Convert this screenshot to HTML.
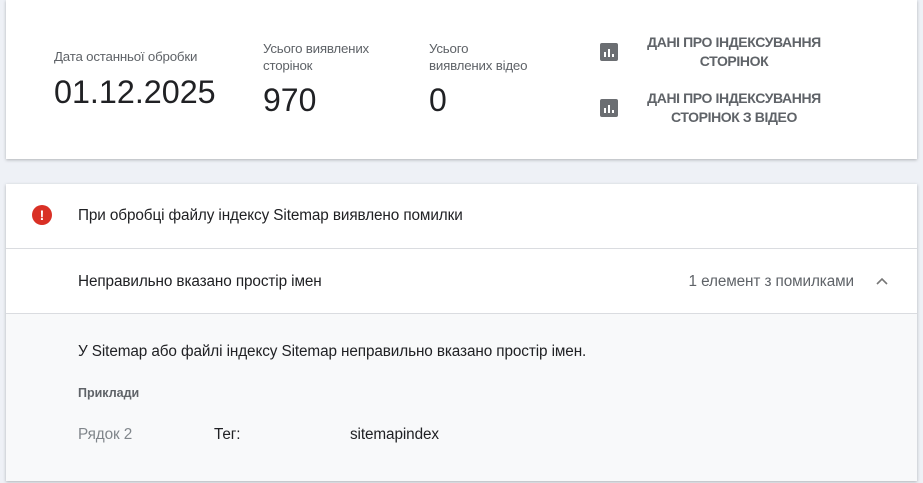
<!DOCTYPE html>
<html><head><meta charset="utf-8"><style>
*{margin:0;padding:0;box-sizing:border-box}
body{width:923px;height:483px;background:#eef1f6;font-family:"Liberation Sans",sans-serif;position:relative;overflow:hidden}
.card{position:absolute;left:6px;width:911px;background:#fff;box-shadow:0 1px 3px rgba(60,64,67,.35)}
.a{position:absolute;white-space:nowrap}
.lbl{font-size:13.3px;color:#5f6368;line-height:17px;letter-spacing:-0.2px}
.big{font-size:32px;color:#202124}
.lnk{font-size:14px;color:#5f6368;text-align:center;line-height:19px;font-weight:bold;letter-spacing:-0.4px;width:230px}
.ic{position:absolute;width:18px;height:18px;background:#6b6e72;border-radius:2px}
.ic i{position:absolute;bottom:4px;width:2px;background:#fff}
.t{font-size:15.3px;letter-spacing:-0.1px}
</style></head><body>
<div class="card" style="top:0;height:159px">
 <div class="a lbl" style="left:48px;top:48px">Дата останньої обробки</div>
 <div class="a big" style="left:48px;top:74px;font-size:32.3px">01.12.2025</div>
 <div class="a lbl" style="left:257px;top:40px">Усього виявлених<br>сторінок</div>
 <div class="a big" style="left:257px;top:82px">970</div>
 <div class="a lbl" style="left:423px;top:40px">Усього<br>виявлених відео</div>
 <div class="a big" style="left:423px;top:82px">0</div>
 <div class="ic" style="left:594px;top:43px"><i style="left:4px;height:5px"></i><i style="left:8px;height:8px"></i><i style="left:12px;height:3px"></i></div>
 <div class="a lnk" style="left:613px;top:33px">ДАНІ ПРО ІНДЕКСУВАННЯ<br>СТОРІНОК</div>
 <div class="ic" style="left:594px;top:99px"><i style="left:4px;height:5px"></i><i style="left:8px;height:8px"></i><i style="left:12px;height:3px"></i></div>
 <div class="a lnk" style="left:613px;top:89px">ДАНІ ПРО ІНДЕКСУВАННЯ<br>СТОРІНОК З ВІДЕО</div>
</div>
<div class="card" style="top:184px;height:297px">
 <div style="position:absolute;left:26px;top:21px;width:20px;height:20px;border-radius:50%;background:#d93025;color:#fff;font-weight:bold;font-size:14px;text-align:center;line-height:20px">!</div>
 <div class="a t" style="left:72px;top:23px;color:#202124">При обробці файлу індексу Sitemap виявлено помилки</div>
 <div style="position:absolute;left:0;top:64px;width:911px;height:1px;background:#dadce0"></div>
 <div class="a t" style="left:72px;top:89px;color:#202124">Неправильно вказано простір імен</div>
 <div class="a t" style="right:63px;top:89px;color:#5f6368">1 елемент з помилками</div>
 <svg class="a" style="left:869px;top:90px" width="14" height="14" viewBox="0 0 14 14"><path d="M2 10 L7 5 L12 10" fill="none" stroke="#777" stroke-width="1.6"/></svg>
 <div style="position:absolute;left:0;top:129px;width:911px;height:168px;background:#f8f9fa;border-top:1px solid #dadce0"></div>
 <div class="a t" style="left:72px;top:159px;color:#202124">У Sitemap або файлі індексу Sitemap неправильно вказано простір імен.</div>
 <div class="a" style="left:72px;top:202px;font-size:12.5px;color:#5f6368;font-weight:bold">Приклади</div>
 <div class="a t" style="left:72px;top:242px;color:#80868b">Рядок 2</div>
 <div class="a t" style="left:208px;top:242px;color:#202124">Тег:</div>
 <div class="a t" style="left:344px;top:242px;color:#202124">sitemapindex</div>
</div>
</body></html>
